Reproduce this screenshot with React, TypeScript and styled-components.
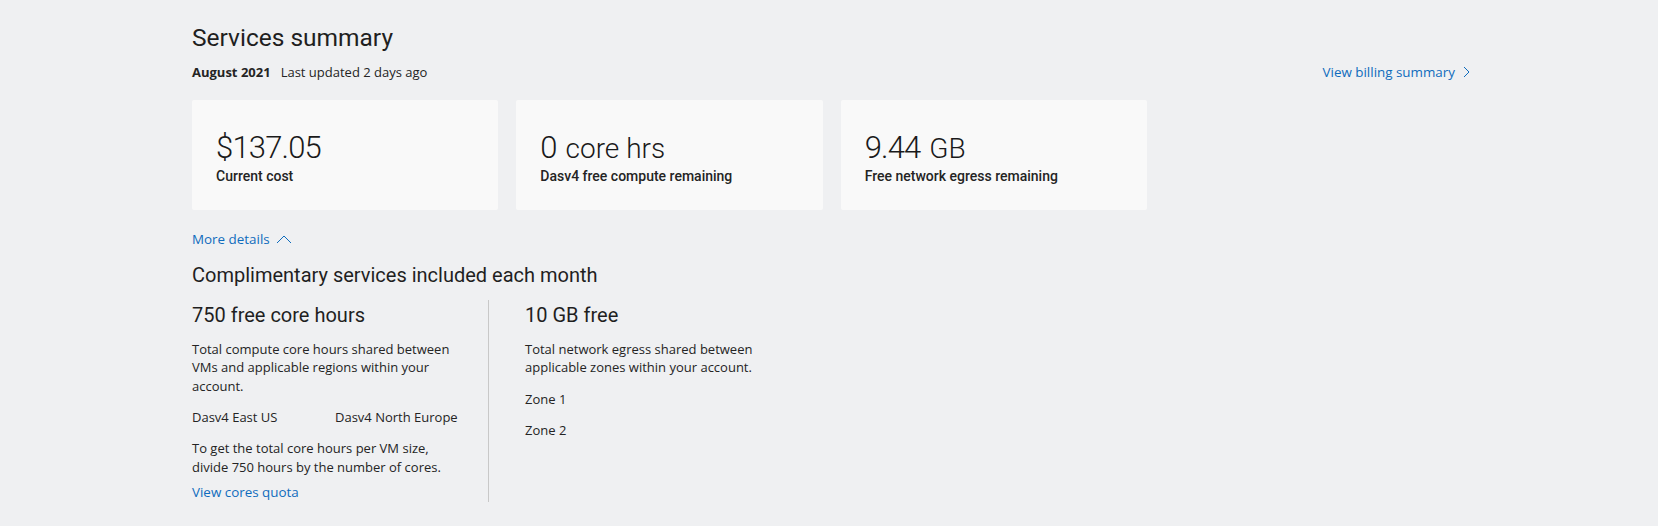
import React from "react";
import styled, { createGlobalStyle } from "styled-components";

const GlobalStyle = createGlobalStyle`
  html, body {
    margin: 0;
    padding: 0;
    background: #eff0f2;
  }
  body {
    font-family: "Open Sans", "Noto Sans", sans-serif;
    color: #242424;
  }
  * { box-sizing: border-box; }
`;

const Page = styled.main`
  width: 1278px;
  margin: 0 0 0 192px;
  padding-top: 22px;
`;

const Title = styled.h1`
  margin: 0;
  font-family: Roboto, "Noto Sans", sans-serif;
  font-weight: 400;
  font-size: 24.5px;
  line-height: 32px;
  color: #1f1f1f;
`;

const MetaRow = styled.div`
  margin-top: 8px;
  display: flex;
  justify-content: space-between;
  align-items: baseline;
  font-size: 13px;
  line-height: 20px;
`;

const Meta = styled.div`
  display: flex;
  gap: 10px;
`;

const Month = styled.span`
  font-weight: 700;
`;

const Link = styled.a<{ $gap?: number }>`
  display: inline-flex;
  align-items: center;
  gap: ${(p) => p.$gap ?? 6}px;
  color: #0f6cbd;
  text-decoration: none;
  font-size: 13.4px;
  line-height: 20px;
  cursor: pointer;
  svg { display: block; }
`;

const Cards = styled.section`
  margin-top: 18px;
  width: 955px;
  display: grid;
  grid-template-columns: repeat(3, 1fr);
  gap: 18px;
`;

const Card = styled.div`
  height: 110px;
  padding: 30px 24px 0;
  background: #f9f9f9;
  border-radius: 2px;
`;

const Value = styled.div`
  font-family: Roboto, "Noto Sans", sans-serif;
  font-weight: 300;
  font-size: 31px;
  line-height: 36px;
  letter-spacing: -0.8px;
  color: #1a1a1a;
  white-space: nowrap;
`;

const Unit = styled.span`
  font-size: 28px;
  line-height: 1;
  letter-spacing: 0;
  margin-left: 2px;
`;

const Label = styled.div`
  font-family: Roboto, "Noto Sans", sans-serif;
  font-weight: 500;
  font-size: 14px;
  line-height: 20px;
  color: #242424;
`;

const Details = styled.div`
  margin-top: 17px;
`;

const SectionTitle = styled.h2`
  margin: 13px 0 0;
  font-family: Roboto, "Noto Sans", sans-serif;
  font-weight: 400;
  font-size: 20px;
  line-height: 26px;
  color: #1f1f1f;
`;

const Columns = styled.div`
  margin-top: 12px;
  display: flex;
  align-items: stretch;
`;

const Column = styled.div<{ $divided?: boolean }>`
  width: ${(p) => (p.$divided ? "308px" : "296px")};
  padding-right: ${(p) => (p.$divided ? "0" : "24px")};
  padding-left: ${(p) => (p.$divided ? "36px" : "0")};
  border-left: ${(p) => (p.$divided ? "1px solid #c8c8c8" : "none")};
`;

const ColumnTitle = styled.h3`
  margin: 0;
  font-family: Roboto, "Noto Sans", sans-serif;
  font-weight: 400;
  font-size: 20px;
  line-height: 30px;
  color: #1f1f1f;
`;

const Text = styled.p<{ $first?: boolean }>`
  margin: ${(p) => (p.$first ? "9.6px" : "12.5px")} 0 0;
  font-size: 13px;
  line-height: 18.7px;
`;

const Regions = styled.div`
  margin-top: 12.5px;
  display: grid;
  grid-template-columns: 1fr 1fr;
  column-gap: 14px;
  font-size: 13px;
  line-height: 18.7px;
`;

const QuotaLink = styled(Link)`
  margin-top: 6.6px;
  line-height: 18.7px;
`;

const ChevronRight = () => (
  <svg width="7" height="12" viewBox="0 0 7 12" fill="none">
    <path d="M1 1l5 5-5 5" stroke="#0f6cbd" strokeWidth="1" />
  </svg>
);

const ChevronUp = () => (
  <svg width="16" height="9" viewBox="0 0 16 9" fill="none">
    <path d="M1 8l7-7 7 7" stroke="#0f6cbd" strokeWidth="1" />
  </svg>
);

const cards = [
  { value: "$137.05", unit: "", label: "Current cost" },
  { value: "0", unit: "core hrs", label: "Dasv4 free compute remaining" },
  { value: "9.44", unit: "GB", label: "Free network egress remaining" },
];

export default function App() {
  return (
    <>
      <GlobalStyle />
      <Page>
        <Title>Services summary</Title>
        <MetaRow>
          <Meta>
            <Month>August 2021</Month>
            <span>Last updated 2 days ago</span>
          </Meta>
          <Link $gap={8}>
            View billing summary
            <ChevronRight />
          </Link>
        </MetaRow>

        <Cards>
          {cards.map((c) => (
            <Card key={c.label}>
              <Value>
                {c.value}
                {c.unit && <Unit> {c.unit}</Unit>}
              </Value>
              <Label>{c.label}</Label>
            </Card>
          ))}
        </Cards>

        <Details>
          <Link $gap={6}>
            More details
            <ChevronUp />
          </Link>
        </Details>

        <SectionTitle>Complimentary services included each month</SectionTitle>

        <Columns>
          <Column>
            <ColumnTitle>750 free core hours</ColumnTitle>
            <Text $first>
              Total compute core hours shared between VMs and applicable regions within your account.
            </Text>
            <Regions>
              <span>Dasv4 East US</span>
              <span>Dasv4 North Europe</span>
            </Regions>
            <Text>
              To get the total core hours per VM size, divide 750 hours by the number of cores.
            </Text>
            <QuotaLink>View cores quota</QuotaLink>
          </Column>
          <Column $divided>
            <ColumnTitle>10 GB free</ColumnTitle>
            <Text $first>Total network egress shared between applicable zones within your account.</Text>
            <Text>Zone 1</Text>
            <Text>Zone 2</Text>
          </Column>
        </Columns>
      </Page>
    </>
  );
}
